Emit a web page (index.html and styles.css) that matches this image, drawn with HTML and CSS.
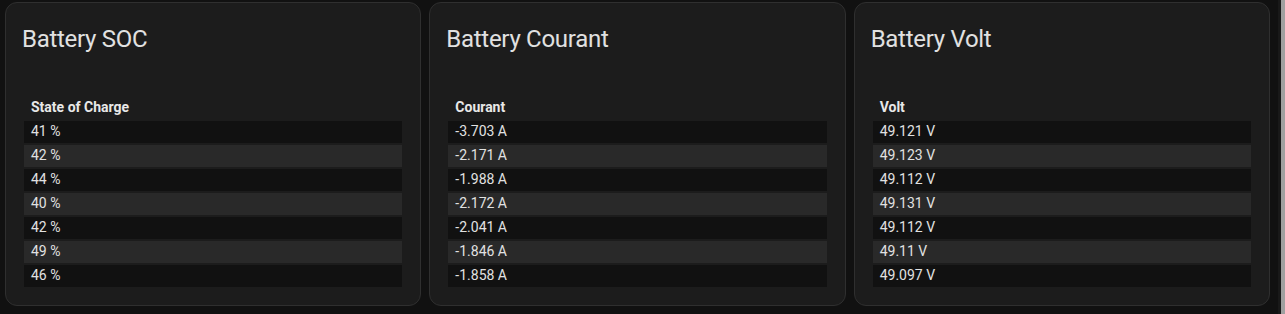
FILE: index.html
```html
<!DOCTYPE html>
<html lang="en">
<head>
<meta charset="utf-8">
<title>Battery</title>
<link rel="stylesheet" href="styles.css">
</head>
<body>
<div class="page">
  <main class="grid">
    <section class="card">
      <h1 class="card-title">Battery SOC</h1>
      <table class="data">
        <thead><tr><th>State of Charge</th></tr></thead>
        <tbody>
          <tr><td>41 %</td></tr>
          <tr><td>42 %</td></tr>
          <tr><td>44 %</td></tr>
          <tr><td>40 %</td></tr>
          <tr><td>42 %</td></tr>
          <tr><td>49 %</td></tr>
          <tr><td>46 %</td></tr>
        </tbody>
      </table>
    </section>
    <section class="card">
      <h1 class="card-title">Battery Courant</h1>
      <table class="data">
        <thead><tr><th>Courant</th></tr></thead>
        <tbody>
          <tr><td>-3.703 A</td></tr>
          <tr><td>-2.171 A</td></tr>
          <tr><td>-1.988 A</td></tr>
          <tr><td>-2.172 A</td></tr>
          <tr><td>-2.041 A</td></tr>
          <tr><td>-1.846 A</td></tr>
          <tr><td>-1.858 A</td></tr>
        </tbody>
      </table>
    </section>
    <section class="card">
      <h1 class="card-title">Battery Volt</h1>
      <table class="data">
        <thead><tr><th>Volt</th></tr></thead>
        <tbody>
          <tr><td>49.121 V</td></tr>
          <tr><td>49.123 V</td></tr>
          <tr><td>49.112 V</td></tr>
          <tr><td>49.131 V</td></tr>
          <tr><td>49.112 V</td></tr>
          <tr><td>49.11 V</td></tr>
          <tr><td>49.097 V</td></tr>
        </tbody>
      </table>
    </section>
  </main>
  <div class="scrollbar"><div class="thumb"></div></div>
</div>
</body>
</html>
```
FILE: styles.css
```css
html, body {
  margin: 0;
  padding: 0;
  background: #111111;
  overflow: hidden;
}
body {
  font-family: Roboto, "Noto Sans", sans-serif;
  color: #e1e1e1;
}
.page {
  display: flex;
  height: 314px;
}
.grid {
  flex: 1;
  display: grid;
  grid-template-columns: repeat(3, 1fr);
  column-gap: 8px;
  align-items: start;
  padding: 2px 8px 0 5px;
}
.card {
  background: #1c1c1c;
  border: 1px solid #2f2f2f;
  border-radius: 12px;
  padding: 20px 16px 16px;
}
.card-title {
  margin: 0;
  font-size: 24px;
  font-weight: 400;
  line-height: 32px;
  letter-spacing: -0.012em;
  color: #e1e1e1;
}
.data {
  width: 100%;
  margin-top: 40px;
  border-collapse: separate;
  border-spacing: 2px;
  font-size: 14px;
  line-height: 16px;
}
.data th, .data td {
  text-align: left;
  padding: 2px 7px 4px;
  height: 16px;
}
.data th {
  font-weight: 700;
  color: #e8e8e8;
}
.data tbody tr:nth-child(odd) td {
  background: #111111;
}
.data tbody tr:nth-child(even) td {
  background: #292929;
}
.scrollbar {
  width: 7px;
  display: flex;
  background: #191919;
}
.thumb {
  margin-left: 3px;
  flex: 1;
  background: #a0a0a0;
}
```
